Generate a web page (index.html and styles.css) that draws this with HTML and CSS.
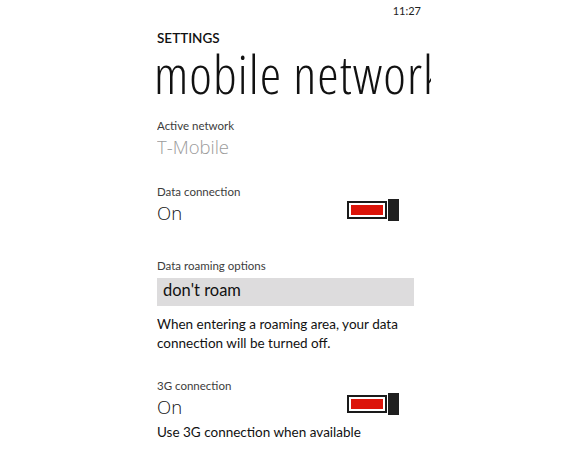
FILE: index.html
```html
<!DOCTYPE html>
<html>
<head>
<meta charset="utf-8">
<link rel="stylesheet" href="styles.css">
</head>
<body>
<div class="screen">
  <div class="status"><span class="time">11:27</span></div>
  <div class="header">
    <div class="app-title">SETTINGS</div>
    <div class="page-title">mobile network</div>
  </div>
  <div class="content">
    <div class="group g-active">
      <div class="label">Active network</div>
      <div class="value muted">T-Mobile</div>
    </div>
    <div class="group g-data">
      <div class="label">Data connection</div>
      <div class="toggle-row">
        <span class="value">On</span>
        <span class="toggle"><span class="track"><span class="fill"></span></span><span class="thumb"></span></span>
      </div>
    </div>
    <div class="group g-roam">
      <div class="label">Data roaming options</div>
      <div class="picker">don't roam</div>
      <div class="desc">When entering a roaming area, your data connection will be turned off.</div>
    </div>
    <div class="group g-3g">
      <div class="label">3G connection</div>
      <div class="toggle-row">
        <span class="value">On</span>
        <span class="toggle"><span class="track"><span class="fill"></span></span><span class="thumb"></span></span>
      </div>
      <div class="desc desc-3g">Use 3G connection when available</div>
    </div>
  </div>
</div>
</body>
</html>
```
FILE: styles.css
```css
html, body {
  margin: 0;
  padding: 0;
  background: #ffffff;
}
body {
  font-family: "Lato", "Open Sans", sans-serif;
  color: #111111;
  width: 580px;
  height: 473px;
  overflow: hidden;
}
.screen {
  margin-left: 157px;
  width: 274px;
  overflow: hidden;
}
.status {
  display: flex;
  justify-content: flex-end;
  padding-right: 10px;
  height: 22px;
}
.time {
  font-size: 11px;
  line-height: 22px;
  color: #222222;
}
.header {
  margin-top: 7px;
}
.app-title {
  font-size: 13.5px;
  font-weight: 600;
  line-height: 18px;
  color: #111111;
}
.page-title {
  font-family: "Open Sans", "Lato", sans-serif;
  font-size: 54px;
  font-weight: 300;
  font-stretch: 75%;
  letter-spacing: 1px;
  line-height: 53px;
  white-space: nowrap;
  color: #111111;
  margin-left: -3px;
}
.content {
  padding-top: 18px;
}
.label {
  font-size: 11.5px;
  line-height: 16px;
  color: #3c3c3c;
}
.value {
  font-family: "Open Sans", "Lato", sans-serif;
  font-weight: 300;
  font-size: 18.5px;
  line-height: 24px;
  color: #111111;
}
.muted {
  color: #9b9b9b;
  margin-top: 1px;
}
.g-data {
  margin-top: 25px;
}
.g-roam {
  margin-top: 33px;
}
.g-3g {
  margin-top: 25px;
}
.toggle-row {
  display: flex;
  align-items: flex-start;
  justify-content: space-between;
  width: 242px;
  margin-top: 1px;
}
.toggle {
  display: flex;
  align-items: center;
  margin-top: -2px;
}
.track {
  width: 32px;
  height: 10px;
  border: 2px solid #1a1a1a;
  padding: 2px;
  background: #ffffff;
  display: flex;
}
.fill {
  flex: 1;
  background: #dc140a;
}
.thumb {
  width: 11px;
  height: 22px;
  background: #1f1f1f;
  margin-left: 1px;
}
.picker {
  width: 251px;
  padding-left: 6px;
  margin-top: 4px;
  height: 28px;
  line-height: 24px;
  font-size: 16.5px;
  background: #dddcdd;
  color: #111111;
}
.desc {
  font-size: 13.5px;
  line-height: 19px;
  color: #111111;
  margin-top: 9px;
  width: 250px;
}
.desc-3g {
  margin-top: 4px;
}
```
